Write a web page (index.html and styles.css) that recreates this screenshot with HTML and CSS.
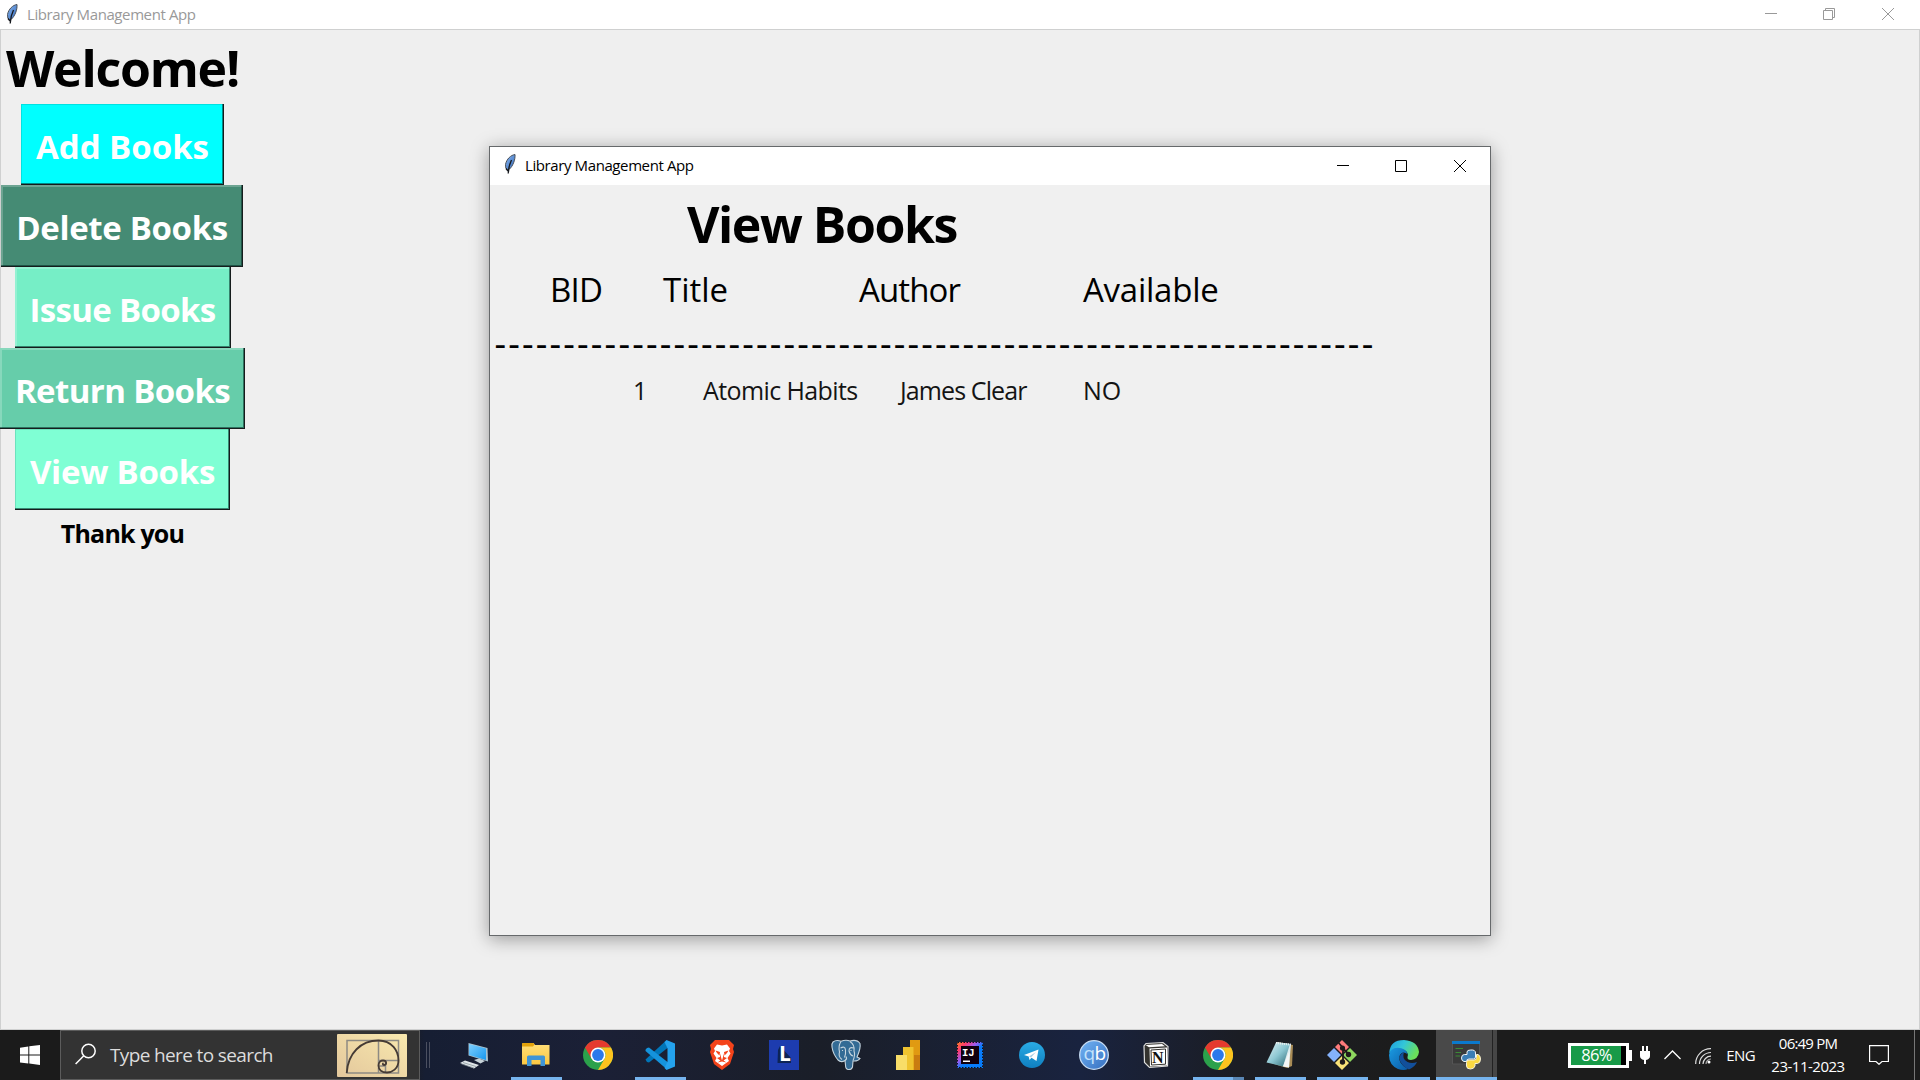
FILE: index.html
```html
<!DOCTYPE html>
<html lang="en">
<head>
<meta charset="utf-8">
<title>Library Management App</title>
<link rel="stylesheet" href="styles.css">
</head>
<body>
<svg class="defs" width="0" height="0" aria-hidden="true">
  <defs>
    <linearGradient id="feather-fill" x1="0" y1="0" x2="1" y2="1"><stop offset="0" stop-color="#8fb9ee"/><stop offset="1" stop-color="#2c66bd"/></linearGradient>
    <linearGradient id="spiral-bg" x1="0" y1="1" x2="1" y2="0"><stop offset="0" stop-color="#e3c79c"/><stop offset="1" stop-color="#f9e9ae"/></linearGradient>
    <linearGradient id="pc-fill" x1="0" y1="0" x2="1" y2="1"><stop offset="0" stop-color="#7fd0ff"/><stop offset="1" stop-color="#1697ee"/></linearGradient>
    <linearGradient id="edge-a" x1="0" y1="0" x2="1" y2=".4"><stop offset="0" stop-color="#1b9de0"/><stop offset=".5" stop-color="#33c6d8"/><stop offset="1" stop-color="#6be05a"/></linearGradient>
    <linearGradient id="edge-b" x1="0" y1="0" x2="1" y2="1"><stop offset="0" stop-color="#1a9be2"/><stop offset="1" stop-color="#0c59a4"/></linearGradient>
    <linearGradient id="ij-a" x1="0" y1="0" x2="1" y2="1"><stop offset="0" stop-color="#fd8224"/><stop offset=".2" stop-color="#fe3a6e"/><stop offset=".4" stop-color="#9b5cf0"/><stop offset=".55" stop-color="#087cfa"/><stop offset="1" stop-color="#087cfa"/></linearGradient>
    <linearGradient id="tg-a" x1="0" y1="0" x2="0" y2="1"><stop offset="0" stop-color="#2aabe4"/><stop offset="1" stop-color="#0f7fc0"/></linearGradient>
    <linearGradient id="qb-a" x1="0" y1="0" x2="1" y2="1"><stop offset="0" stop-color="#72b4f5"/><stop offset="1" stop-color="#356ebf"/></linearGradient>
    <linearGradient id="pad-a" x1="0" y1="0" x2="1" y2="1"><stop offset="0" stop-color="#e4f4f6"/><stop offset=".5" stop-color="#8cc7d2"/><stop offset="1" stop-color="#27626e"/></linearGradient>
    <linearGradient id="folder-a" x1="0" y1="0" x2="0" y2="1"><stop offset="0" stop-color="#ffdf7a"/><stop offset="1" stop-color="#fbc842"/></linearGradient>
    <symbol id="feather" viewBox="0 0 12 20">
      <path d="M11 .5C7 1 2.500 5 1.500 10.500L1.800 14 3.700 16.200 5.500 15C8.500 12.500 11.500 6 11 .5Z" fill="url(#feather-fill)" stroke="#4a5058"/>
      <path d="M7.500 6C6 9 4.500 13 4.200 19.500M2 14.500 4 17" fill="none" stroke="#15181d" stroke-width="1.300"/>
    </symbol>
    <symbol id="chrome" viewBox="0 0 30 30">
      <circle cx="15" cy="15" r="15" fill="#2ba14b"/>
      <path d="M2 7.500A15 15 0 0 1 28 7.500H15L8.500 18.700Z" fill="#e53a2e"/>
      <path d="M28 7.500A15 15 0 0 1 15 30L21.500 18.800A7.500 7.500 0 0 0 15 7.500Z" fill="#fcc31e"/>
      <circle cx="15" cy="15" r="7.500" fill="#fff"/><circle cx="15" cy="15" r="5.900" fill="#2b78ea"/>
    </symbol>
  </defs>
</svg>

<div class="screen">
  <header class="titlebar titlebar-main">
    <svg class="feather" width="12" height="20"><use href="#feather"/></svg>
    <span class="caption">Library Management App</span>
    <div class="controls">
      <svg width="12" height="12" viewBox="0 0 12 12"><path d="M0 5.500H12"/></svg>
      <svg width="12" height="12" viewBox="0 0 12 12"><path d="M.5 2.500H9.500V11.500H.5ZM2.500 2.500V.5H11.500V9.500H9.500"/></svg>
      <svg class="close" width="12" height="12" viewBox="0 0 12 12"><path d="M0 0 12 12M12 0 0 12"/></svg>
    </div>
  </header>

  <main class="desktop">
    <nav class="menu">
      <h1 class="welcome">Welcome!</h1>
      <button class="btn btn-add">Add Books</button>
      <button class="btn btn-delete">Delete Books</button>
      <button class="btn btn-issue">Issue Books</button>
      <button class="btn btn-return">Return Books</button>
      <button class="btn btn-view">View Books</button>
      <p class="thanks">Thank you</p>
    </nav>
  </main>

  <section class="dialog">
    <header class="titlebar titlebar-dialog">
      <svg class="feather" width="12" height="20"><use href="#feather"/></svg>
      <span class="caption">Library Management App</span>
      <div class="controls">
        <svg width="12" height="12" viewBox="0 0 12 12"><path d="M0 5.500H12"/></svg>
        <svg width="12" height="12" viewBox="0 0 12 12"><path d="M.5 .5H11.500V11.500H.5Z"/></svg>
        <svg class="close" width="12" height="12" viewBox="0 0 12 12"><path d="M0 0 12 12M12 0 0 12"/></svg>
      </div>
    </header>
    <h2 class="heading">View Books</h2>
    <div class="columns">
      <span class="col-bid">BID</span><span>Title</span><span class="col-author">Author</span><span class="col-available">Available</span>
    </div>
    <div class="rule">----------------------------------------------------------------</div>
    <div class="record">
      <span>1</span><span class="rec-title">Atomic Habits</span><span class="rec-author">James Clear</span><span>NO</span>
    </div>
  </section>

  <footer class="taskbar">
    <div class="start">
      <svg width="20" height="20" viewBox="0 0 20 20" fill="#fff"><path d="M0 2.700 8.300 1.500V9.400H0ZM9.300 1.300 20 0V9.400H9.300ZM0 10.500H8.300V18.500L0 17.400ZM9.300 10.500H20V20L9.300 18.600Z"/></svg>
    </div>
    <div class="search">
      <svg class="lens" width="22" height="22" viewBox="0 0 22 22" fill="none" stroke="#fff" stroke-width="1.500"><circle cx="13.500" cy="8" r="6.700"/><path d="M8.800 12.800.6 21"/></svg>
      <span class="search-text">Type here to search</span>
      <svg class="spiral" width="70" height="43" viewBox="0 0 70 43"><rect width="70" height="43" rx="1" fill="url(#spiral-bg)"/><g fill="none" stroke="#8e8b83" stroke-width="1.500"><path d="M10 6.500H61.500V39H10ZM41.500 6.500V39M41.500 26.500H61.500M48.500 26.500V39M41.500 32H48.500"/></g><path d="M9.700 39C11 19 24 6.500 41.500 6.500 55 6.500 61.500 17 61.500 26.500 61.500 35 55 38.500 50 38.500 45 38.500 41.500 36 41.500 31.500 41.500 28 44 26.500 46 26.500 50 26.500 50 31 47 31 45.500 31 45.500 29.500 46.500 29" fill="none" stroke="#453b35" stroke-width="1.800"/></svg>
    </div>
    <div class="grip"></div>
    <div class="apps">
      <div class="app"><svg width="30" height="30" viewBox="0 0 30 30"><path d="M9.500 3 28.500 8 29 21.500 9.500 15.500Z" fill="#a9c1cd"/><path d="M10 4 27 8.500V20L10 15Z" fill="url(#pc-fill)"/><path d="M15 20 20 18.500 26 21 21.500 23.500Z" fill="#c7d3d9"/><path d="M1 23 6 20.500 20 25 15 28.500Z" fill="#dfe5e8"/><path d="M4 22.500 17 26.500M2.500 24 15 28" stroke="#7e8c94" stroke-width=".7"/></svg></div>
      <div class="app running"><svg width="30" height="30" viewBox="0 0 30 30"><path d="M1 4.500Q1 3 2.500 3H12.500L14 5H28.500V24.500H1Z" fill="url(#folder-a)"/><path d="M1 4Q1 3 2 3H12.500L13.500 4.500 12 6.500H1Z" fill="#e2a20b"/><path d="M6 26V17Q6 15.500 7.500 15.500H22.500Q24 15.500 24 17V26H19.500V20H10.500V26Z" fill="#3f94d5"/></svg></div>
      <div class="app"><svg width="30" height="30"><use href="#chrome"/></svg></div>
      <div class="app running"><svg width="30" height="30" viewBox="0 0 30 30"><path d="M.5 19.500 20 1.500 22.500 8 4 22.500 2 22Z" fill="#0075b8"/><path d="M2 8 4 7.500 22.500 22 21.500 29 .5 11Q0 9.500 2 8Z" fill="#1593dc"/><path d="M21.500 0 30 3.500V26.500L21.500 30 19.500 28 22.500 21.500V8.500L19.500 2Z" fill="#24a2ed"/></svg></div>
      <div class="app"><svg width="30" height="30" viewBox="0 0 30 30"><path d="M8 0H22L25 3 27 5 26 9 27 12 23 24 15 30 7 24 3 12 4 9 3 5 5 3Z" fill="#f4431a"/><path d="M10 4.500 15 5.500 20 4.500 23 8.500 22 11 23.500 13.500 20.500 18 22 21 15 26 8 21 9.500 18 6.500 13.500 8 11 7 8.500Z" fill="#fff"/><path d="M8.500 10.500 13 12 12.500 15.500 10 13Zm13 0L17 12 17.500 15.500 20 13ZM10 18 13 17V13.500L15 20.500 17 13.500V17L20 18 16.500 20.500 19.500 22.500 15 21.500 10.500 22.500 13.500 20.500Z" fill="#f4431a"/></svg></div>
      <div class="app"><svg width="30" height="30" viewBox="0 0 30 30"><path d="M0 0H30V30H0Z" fill="#1d3caf"/><path d="M11 6 9 10 8.500 23H22V18Z" fill="#0d2456"/><text x="10" y="21.300" class="ico-l">L</text></svg></div>
      <div class="app"><svg width="30" height="30" viewBox="0 0 30 30"><path d="M2 2Q5-.5 10 1.200 15-.5 19 1 26-1 29 3.500 30 8 26 17L29 18.500Q27 21.500 22 21L21.500 27Q20.500 30 17 29.500 14.500 29 14.500 25L14 20.500Q10 23 7 20 2 14 1 7 .5 3.500 2 2Z" fill="#336b95" stroke="#c6d5df" stroke-width="1.100"/><path d="M10 1.500Q7 6 8.500 12 7 17 11 19.500M9.500 8Q14 5.500 14.500 10 15 14 13.500 17.500M19 1.500Q24 5 23 11 24.500 15 22 20.500M22.500 8Q18 6.500 18 11 19 15 22 16M11.500 10V11M20 10V11M14 20.500Q16.500 19 15 16.500" fill="none" stroke="#c6d5df" stroke-width="1.100"/></svg></div>
      <div class="app"><svg width="30" height="30" viewBox="0 0 30 30"><path d="M17 0H27V30H17Z" fill="#e09a12"/><path d="M21 15H27V30H21Z" fill="#c97c10"/><path d="M10 7H20.500V30H10Z" fill="#efc32f"/><path d="M3 15H14V30H3Z" fill="#f8dd68"/></svg></div>
      <div class="app"><svg width="26" height="26" viewBox="0 0 26 26"><path d="M0 0H26V26H0Z" fill="url(#ij-a)"/><path d="M.5 .5H25.500V25.500H.5Z" fill="none" stroke="#10121d" stroke-dasharray="1.500 1.500"/><path d="M4 4H22V22H4Z" fill="#10000f"/><text x="5" y="13.500" class="ico-ij">IJ</text><path d="M6 18.500H13V20H6Z" fill="#fff"/></svg></div>
      <div class="app"><svg width="26" height="26" viewBox="0 0 26 26"><circle cx="13" cy="13" r="13" fill="url(#tg-a)"/><path d="M5 13 19.500 7.500 17.500 19 12.500 15.800 10.500 18 9.700 14.500Z" fill="#fff"/><path d="M10 14.500 17 10 12 15.500" fill="#a9cfe5"/></svg></div>
      <div class="app"><svg width="30" height="30" viewBox="0 0 30 30"><circle cx="15" cy="15" r="14.300" fill="url(#qb-a)" stroke="#c7dcf3" stroke-width="1.300"/><text x="4.500" y="20" class="ico-qb"><tspan fill="#c3e2fb">q</tspan><tspan fill="#fff">b</tspan></text></svg></div>
      <div class="app"><svg width="26" height="26" viewBox="0 0 26 26"><path d="M3 1.500 20 .5 25 4.500 24.500 24 6.500 25.500 1.500 20.500 1 4Z" fill="#34332f" stroke="#ddd" stroke-width="1.200"/><path d="M6.500 6.500 24 5.500V23.500L7 24.500Z" fill="#fff"/><path d="M8 8 22.500 7V22.200L8.500 23Z" fill="#fff" stroke="#34332f"/><path d="M2.500 3 19 2 22 4.300 6 5.200Z" fill="#fff"/><text x="9" y="20.500" class="ico-n">N</text></svg></div>
      <div class="app running split"><svg width="30" height="30"><use href="#chrome"/></svg></div>
      <div class="app running"><svg width="30" height="30" viewBox="0 0 30 30"><path d="M12 2 28 5 27 26 22 28 3 22Z" fill="#a98c56"/><path d="M11 2 26 4 24 27.500 18 26Z" fill="#dcebed"/><path d="M11 2.500 25 4 18 26.500 1.500 22.500Z" fill="url(#pad-a)"/><path d="M18 26.500 24.500 11 24 27.500Z" fill="#f3f6f6"/><path d="M11 3 26 4.700" stroke="#e8eeee" stroke-width="2" stroke-dasharray="1 1"/></svg></div>
      <div class="app running"><svg width="30" height="30" viewBox="0 0 30 30"><path d="M15 0 22 7 15 14 8 7Z" fill="#ff7b7b"/><path d="M23 8 30 15 23 22 16 15Z" fill="#8ed75e"/><path d="M7 8 14 15 7 22 0 15Z" fill="#84b2fb"/><path d="M15 16 22 23 15 30 8 23Z" fill="#fae277"/><path d="M11 2 16 8V22M15.500 8 21.500 14" fill="none" stroke="#201b1b" stroke-width="1.800"/><g fill="#201b1b"><circle cx="15.500" cy="8" r="2.600"/><circle cx="21.500" cy="14.500" r="2.700"/><circle cx="15.500" cy="22" r="2.700"/></g></svg></div>
      <div class="app running"><svg width="30" height="30" viewBox="0 0 30 30"><path d="M.2 13Q1 0 15 0 29 1 30 12 29 19.500 22 20 18 20 18.500 17 20 13 16 10.500 8 6.500 .2 13Z" fill="url(#edge-a)"/><path d="M0 15Q1 8 8.500 7.800 17 8 18.500 14 13 10 10.500 16 9 24 19 29 15 31 9 29 0 25 0 15Z" fill="url(#edge-b)"/><path d="M15 12Q9 15 11 21 14 27 20 29.500 26 27 28 22 23 24 18.500 22 12.500 19 15 12Z" fill="#124f9b"/></svg></div>
      <div class="app running active"><svg width="30" height="30" viewBox="0 0 30 30"><path d="M.5 1.500H27.500V24H.5Z" fill="#3a3a3a" stroke="#555"/><path d="M0 1H28V4H0Z" fill="#0b79cc"/><path d="M3.500 8.500H11M3.500 12.500H9M3.500 16H8" stroke="#3b8a35" stroke-width="1.200"/><path d="M18.500 10Q23.500 9.500 23.500 13V17Q23.500 19 21.500 19H17Q14.500 19 14.500 21.500H12Q9.500 21 9.500 18 9.500 14.500 12.500 14.500H15V12Q15 10 18.500 10Z" fill="#3b7db5" stroke="#f0f4f7"/><path d="M24.500 14.500H26Q28.500 15.500 28.500 19 28.500 23 25.500 23.500H23V26Q22 29 18.500 29 14.500 29 14.500 26V22.500Q14.500 20 17 20H22Q24.500 20 24.500 17.500Z" fill="#fbd942" stroke="#f6f0d8"/></svg></div>
    </div>
    <div class="tray">
      <div class="battery"><span>86%</span></div>
      <svg class="plug" width="10" height="18" viewBox="0 0 10 18" fill="#fff"><path d="M2 0H4V5H6V0H8V5H10V10Q10 13 6 14V18H4V14Q0 13 0 10V5H2Z"/></svg>
      <svg class="chevron" width="17" height="10" viewBox="0 0 17 10" fill="none" stroke="#fff" stroke-width="1.300"><path d="M.5 9 8.500 1 16.500 9"/></svg>
      <svg class="wifi" width="17" height="16" viewBox="0 0 17 16" fill="none" stroke="#ddd" stroke-width="1.200"><path d="M.7 16A15 15 0 0 1 16 .7M4.500 16A11.500 11.500 0 0 1 16 4.500M8 16A8 8 0 0 1 16 8.200" /><circle cx="14" cy="14" r="1.500" fill="#fff" stroke="none"/><path d="M11 16A5 5 0 0 1 16 11" stroke="#aaa"/></svg>
      <span class="lang">ENG</span>
      <div class="clock"><span class="time">06:49 PM</span><span class="date">23-11-2023</span></div>
      <svg class="notice" width="20" height="20" viewBox="0 0 20 20" fill="none" stroke="#fff" stroke-width="1.200"><path d="M.6 .6H19.400V16.500H13L10 19.300 7 16.500H.6Z"/></svg>
      <div class="peek"></div>
    </div>
  </footer>
</div>
</body>
</html>
```
FILE: styles.css
```css
* { box-sizing: border-box; }
body {
  margin: 0;
  font-family: "Open Sans", "Noto Sans", sans-serif;
  color: #000;
  overflow: hidden;
}
h1, h2, p { margin: 0; }
.defs { position: absolute; }
.screen {
  position: relative;
  display: flex;
  flex-direction: column;
  width: 1920px;
  height: 1080px;
  background: #efefef;
}

/* title bars */
.titlebar { display: flex; align-items: center; background: #fff; }
.titlebar-main { height: 29px; padding: 0 26px 0 6px; color: #999; }
.titlebar-dialog { height: 38px; padding: 0 24px 0 14px; }
.caption {
  margin-left: 9px;
  padding-bottom: 2px;
  font-size: 15px;
  letter-spacing: -0.4px;
  line-height: 26px;
}
.titlebar-dialog .caption { padding-bottom: 2px; }
.feather { flex: none; margin-top: -2px; }
.titlebar-dialog .feather { margin-top: -4px; }
.controls { display: flex; gap: 46px; margin-left: auto; }
.controls svg { fill: none; stroke: currentColor; stroke-width: 1; }
.controls .close { margin-left: 1px; }
.titlebar-main .controls { margin-top: -1px; }

/* main window */
.desktop {
  flex: 1;
  border: 1px solid #cfd0d0;
  border-width: 1px 1px 1px 0;
  box-shadow: inset 1px 0 #cfd0d0;
}
.menu {
  display: flex;
  flex-direction: column;
  align-items: center;
  width: 245px;
}
.welcome {
  height: 74px;
  font-size: 50px;
  line-height: 77px;
  letter-spacing: -1.2px;
}
.btn {
  height: 81.300px;
  padding: 4px 0 0;
  border: 0;
  font: bold 33px "Open Sans", "Noto Sans", sans-serif;
  color: #fff;
  white-space: nowrap;
  box-shadow: inset -1px -1px #161c1c, inset -2px -2px rgba(0, 40, 35, .55), inset 2px 2px rgba(255, 255, 255, .22);
}
.btn-add { width: 203px; background: #00ffff; box-shadow: inset -1px -1px #161c1c, inset -2px -2px rgba(0, 40, 35, .55), inset 1px 1px rgba(0, 60, 60, .15); }
.btn-delete { width: 242px; margin-right: 1px; background: #458b74; letter-spacing: -0.350px; }
.btn-issue { width: 216px; background: #76eec6; letter-spacing: -0.650px; }
.btn-return { width: 245px; background: #66cdaa; letter-spacing: -0.600px; }
.btn-view { width: 215px; background: #7fffd4; letter-spacing: -0.250px; box-shadow: inset -1px -1px #161c1c, inset -2px -2px rgba(0, 40, 35, .55), inset 1px 1px rgba(0, 60, 60, .15); }
.thanks {
  font-size: 25px;
  font-weight: bold;
  line-height: 46px;
  letter-spacing: -0.8px;
}

/* floating window */
.dialog {
  position: absolute;
  left: 489px;
  top: 146px;
  width: 1002px;
  height: 790px;
  border: 1px solid #66696b;
  background: #f0f0f0;
  box-shadow: 0 3px 17px rgba(0, 0, 0, .36);
}
.heading {
  padding: 2px 0 0 197px;
  font-size: 50px;
  line-height: 74px;
  letter-spacing: -1.450px;
}
.columns {
  display: grid;
  grid-template-columns: 113px 196px 224px 1fr;
  padding-left: 60px;
  font-size: 33px;
  line-height: 58px;
}
.col-bid { letter-spacing: -0.8px; }
.col-author { letter-spacing: -0.9px; }
.col-available { letter-spacing: -0.250px; }
.rule {
  height: 48px;
  padding-left: 4.500px;
  font-size: 36px;
  line-height: 50px;
  letter-spacing: 2.180px;
  white-space: nowrap;
}
.record {
  display: grid;
  grid-template-columns: 70px 197px 183px 1fr;
  padding-left: 143px;
  font-size: 25px;
  line-height: 47px;
  color: #141414;
}
.rec-title { letter-spacing: -0.6px; }
.rec-author { letter-spacing: -0.9px; }

/* taskbar */
.taskbar {
  display: flex;
  height: 50px;
  background: linear-gradient(90deg, #1b1b1b 0, #1b1b1b 400px, #161e33 425px, #1b2036 600px, #1a1e28 820px, #19233f 1080px, #1b1d24 1240px, #1c1c1c 1400px);
  color: #fff;
}
.start { display: flex; align-items: center; justify-content: center; width: 60px; }
.search {
  display: flex;
  align-items: center;
  width: 360px;
  padding: 0 12px 0 14px;
  border: 1px solid #5c5c5c;
  background: #333;
}
.search-text {
  margin-left: 13px;
  font-size: 19px;
  letter-spacing: -0.630px;
  color: #dcdcdc;
}
.lens { margin-top: -2px; }
.spiral { margin-left: auto; }
.grip {
  width: 4px;
  height: 26px;
  margin: 12px 13px 0 6px;
  border: solid #4b5060;
  border-width: 0 1px;
}
.apps { display: flex; }
.app {
  display: flex;
  align-items: center;
  justify-content: center;
  width: 62px;
  height: 50px;
}
.app svg { overflow: visible; }
.running {
  background: linear-gradient(#76b4ee, #76b4ee) 50% 100% / 51px 3px no-repeat;
}
.split {
  background: linear-gradient(90deg, #76b4ee 40px, #5a87b5 40px) 50% 100% / 51px 3px no-repeat;
}
.active {
  width: 61px;
  margin-left: 1px;
  background:
    linear-gradient(#76b4ee, #76b4ee) 0 100% / 100% 3px no-repeat,
    linear-gradient(90deg, #494949 56px, #222 56px, #222 57px, #464646 57px);
}
.ico-l { font: bold 21px "Open Sans", sans-serif; fill: #fff; }
.ico-ij { font: bold 10.500px "Liberation Mono", monospace; fill: #fff; }
.ico-qb { font: 19px "Open Sans", sans-serif; letter-spacing: -.7px; }
.ico-n { font: bold 16px "Liberation Serif", serif; fill: #111; }

.tray { display: flex; align-items: center; margin-left: auto; }
.battery {
  position: relative;
  width: 61px;
  height: 25px;
  padding-left: 10px;
  border: 3px solid #fff;
  background: linear-gradient(90deg, #189a48 50px, #000 50px);
  font-size: 16.500px;
  line-height: 18px;
  letter-spacing: -0.700px;
}
.battery::after {
  content: "";
  position: absolute;
  right: -6px;
  top: 4px;
  width: 3px;
  height: 11px;
  background: #fff;
}
.plug { margin-left: 11px; }
.chevron { margin-left: 14px; }
.wifi { margin-left: 14px; margin-top: 2px; }
.lang { margin-left: 14px; font-size: 15px; letter-spacing: -0.600px; }
.clock {
  display: flex;
  flex-direction: column;
  align-items: center;
  width: 80px;
  margin-left: 13px;
  font-size: 15px;
  line-height: 23px;
}
.time { letter-spacing: -0.800px; }
.date { letter-spacing: -0.500px; }
.notice { margin-left: 21px; }
.peek { width: 6px; height: 50px; margin-left: 25px; border-left: 1px solid #777; }
```
